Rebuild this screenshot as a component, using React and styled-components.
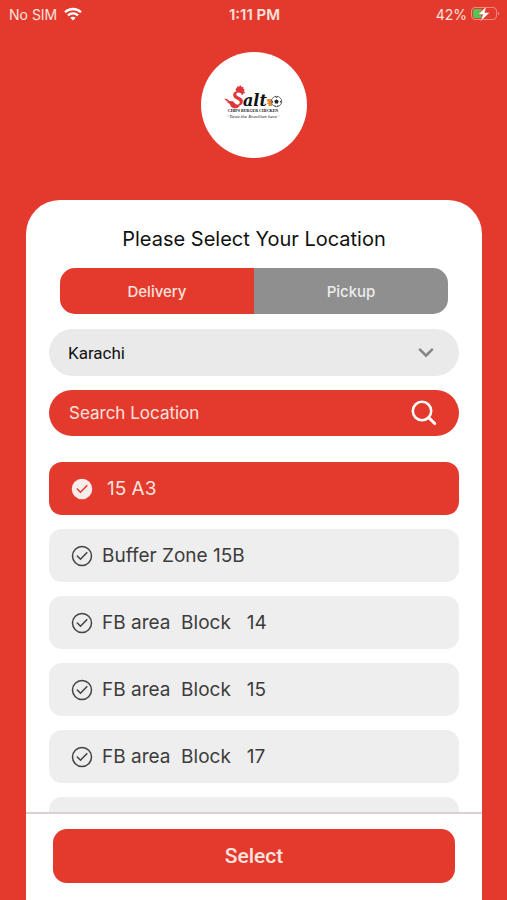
import React, { useState } from 'react'
import styled, { createGlobalStyle, ThemeProvider } from 'styled-components'

const theme = {
  red: '#e43a2e',
  field: '#eaeaea',
  row: '#eeeeee',
  grey: '#8f8f8f',
  text: '#3c3c3c',
  light: '#fbe3df',
  sans: "'Inter', 'Liberation Sans', sans-serif",
  roboto: "'Roboto', 'Liberation Sans', sans-serif",
}

const GlobalStyle = createGlobalStyle`
  *, *::before, *::after {
    box-sizing: border-box;
  }

  body {
    margin: 0;
    background-color: ${theme.red};
    font-family: ${theme.sans};
  }

  button, input, select {
    font: inherit;
    border: none;
    margin: 0;
  }
`

const Screen = styled.div`
  height: 100vh;
  display: flex;
  flex-direction: column;
  background-color: ${props => props.theme.red};
`

const StatusBar = styled.header`
  display: grid;
  grid-template-columns: 1fr auto 1fr;
  align-items: center;
  height: 28px;
  padding: 0 7px 0 9px;
  flex-shrink: 0;
  font-size: 14px;
  color: ${props => props.theme.light};
`

const StatusGroup = styled.div`
  display: flex;
  align-items: center;
  justify-content: ${props => (props.$end ? 'flex-end' : 'flex-start')};
  gap: ${props => (props.$end ? '4px' : '7px')};
`

const Time = styled.span`
  font-size: 15px;
  font-weight: 600;
`

const Logo = styled.div`
  width: 106px;
  height: 106px;
  margin: 24px auto 42px;
  flex-shrink: 0;
  border-radius: 50%;
  background-color: #fff;
`

const Card = styled.main`
  flex: 1;
  min-height: 0;
  display: flex;
  flex-direction: column;
  margin: 0 25px 0 26px;
  border-radius: 34px 34px 0 0;
  background-color: #fff;
`

const Top = styled.div`
  padding: 24px 23px 0;
  flex-shrink: 0;
`

const Title = styled.h1`
  margin: 0 0 14px;
  font-size: 20px;
  line-height: 30px;
  font-weight: 400;
  text-align: center;
  color: #111;
`

const Tabs = styled.div`
  display: flex;
  height: 46px;
  margin: 0 11px 15px;
  border-radius: 15px;
  overflow: hidden;
`

const Tab = styled.button`
  flex: 1;
  padding: 0;
  font-size: 15px;
  font-weight: 500;
  color: ${props => (props.$active ? props.theme.light : '#ececec')};
  background-color: ${props => (props.$active ? props.theme.red : props.theme.grey)};
`

const City = styled.div`
  display: grid;
  align-items: center;
  height: 47px;
  margin-bottom: 14px;

  select, svg {
    grid-area: 1 / 1;
  }

  select {
    width: 100%;
    height: 100%;
    padding: 0 19px;
    appearance: none;
    border-radius: 24px;
    font-family: ${props => props.theme.roboto};
    font-size: 17px;
    color: #111;
    background-color: ${props => props.theme.field};
  }

  svg {
    justify-self: end;
    margin-right: 25px;
    pointer-events: none;
  }
`

const Search = styled.div`
  display: flex;
  align-items: center;
  height: 46px;
  padding: 0 22px 0 20px;
  border-radius: 23px;
  background-color: ${props => props.theme.red};

  input {
    flex: 1;
    min-width: 0;
    padding: 0;
    outline: none;
    font-size: 17px;
    color: ${props => props.theme.light};
    background: transparent;
  }

  input::placeholder {
    color: ${props => props.theme.light};
    opacity: 1;
  }

  button {
    display: flex;
    padding: 0;
    background: transparent;
  }
`

const List = styled.div`
  flex: 1;
  min-height: 0;
  display: flex;
  flex-direction: column;
  gap: 14px;
  margin-top: 26px;
  padding: 0 23px;
  overflow-y: auto;
  scrollbar-width: none;
`

const Option = styled.label`
  display: flex;
  align-items: center;
  gap: ${props => (props.$active ? '14px' : '9px')};
  height: 53px;
  padding: 0 22px;
  flex-shrink: 0;
  border-radius: 13px;
  font-size: 19px;
  white-space: pre;
  color: ${props => (props.$active ? props.theme.light : props.theme.text)};
  background-color: ${props => (props.$active ? props.theme.red : props.theme.row)};

  input {
    position: absolute;
    opacity: 0;
    pointer-events: none;
  }
`

const Footer = styled.footer`
  padding: 15px 27px 17px;
  flex-shrink: 0;
  border-top: 2px solid #dccfcf;
`

const SelectButton = styled.button`
  width: 100%;
  height: 54px;
  border-radius: 14px;
  font-family: ${props => props.theme.roboto};
  font-size: 21px;
  font-weight: 500;
  color: ${props => props.theme.light};
  background-color: ${props => props.theme.red};
`

const WifiIcon = () => (
  <svg width="18" height="14" viewBox="0 0 18 14" fill="none" stroke="#fff" strokeWidth="2.3">
    <path d="M1 5.2C5.4.9 12.6.9 17 5.2" />
    <path d="M4 8.4c2.8-2.7 7.2-2.7 10 0" />
    <path d="M9 13.6 6.3 10.8c1.5-1.4 3.9-1.4 5.4 0Z" fill="#fff" stroke="none" />
  </svg>
)

const BatteryIcon = () => (
  <svg width="29" height="16" viewBox="0 0 29 16">
    <rect x="0.5" y="1.5" width="25" height="12" rx="3.5" fill="none" stroke="#f08a80" />
    <path d="M27 5.500c1.600.6 1.600 3.400 0 4Z" fill="#f08a80" />
    <path d="M4 3h6.500v9H4a2 2 0 0 1-2-2V5a2 2 0 0 1 2-2Z" fill="#55c456" />
    <path d="M15.500.2 7 8.600h4.700L9.500 15.500l9.300-9h-5Z" fill="#fff" stroke="#e43a2e" strokeWidth="0.5" />
  </svg>
)

const ChevronIcon = () => (
  <svg width="16" height="10" viewBox="0 0 16 10" fill="none" stroke="#858585" strokeWidth="2.6">
    <path d="m2 1.700 6 6 6-6" strokeLinecap="round" />
  </svg>
)

const SearchIcon = () => (
  <svg width="26" height="26" viewBox="0 0 26 26" fill="none" stroke="#fff" strokeWidth="2.5">
    <circle cx="11" cy="11" r="9.2" />
    <path d="m17.700 17.700 6 5.800" strokeWidth="3" strokeLinecap="round" />
  </svg>
)

const CheckIcon = ({ active }) => (
  <svg width="22" height="22" viewBox="0 0 22 22" fill="none">
    <circle cx="11" cy="11" r="9.5" fill={active ? '#f7eeec' : 'none'} stroke={active ? '#f7eeec' : '#444'} strokeWidth="1.5" />
    <path d="m6.300 11 3.200 3.200 6.300-6.500" stroke={active ? '#e43a2e' : '#444'} strokeWidth="1.6" strokeLinecap="round" />
  </svg>
)

const SaltoLogo = () => (
  <svg width="106" height="106" viewBox="0 0 106 106" role="img" aria-label="Salto">
    {/* rooster: comb, beak and tail around the S */}
    <g fill="#e0353a">
      <path d="M35.500 39.500c-1.400-2.300-1.100-3.500.3-3.300-.2-2 1-2.700 2.200-1.300.7-1.900 2.500-1.600 2.500.3 1.800-.9 2.700.2 1.800 1.900 1.600.2 1.800 1.300.4 2.200l1.700 1.700-3.200.7Z" />
      <path d="M23.500 46.500c2 .2 3.800 1 4.800 2.500 2.200-.4 5 .8 6.500 3.200l4.200 1.500c-2.500 3.300-7 3.300-9.200.5-.8-2.500-2-3.600-4-4l1-.8c-1.500-.6-2.800-1.500-3.300-2.900Z" />
    </g>
    <text x="30" y="54" fontFamily="'Liberation Serif', serif" fontSize="24" fontWeight="700" fontStyle="italic" fill="#e0353a">S</text>
    <text x="42" y="54" fontFamily="'DejaVu Serif', serif" fontSize="16" fontWeight="700" fontStyle="italic" fill="#111">alt</text>
    <path d="M65.500 47.500c3-.8 5.500-.5 7 .7l-1.700 5.500c-1.600.6-3.400.3-4.200-.8l1.800-.5c-1.400-.1-2.300-.6-2.700-1.500l2.300-.2c-1.500-.5-2.200-1.600-2.500-3.200Z" fill="#ee8a2c" />
    <circle cx="75.500" cy="49.500" r="5.200" fill="#fff" stroke="#555" strokeWidth="0.8" />
    <path d="m75.500 47.300 2.200 1.600-.8 2.600h-2.800l-.8-2.600ZM73.500 44.700l2 1 2-1ZM80.500 48l-1.400 1.500 1 2.200ZM70.700 48l1.300 1.500-.9 2.200ZM72.500 53.200l2 .2.800 1.300ZM78.500 53.200l-2 .2-.8 1.300Z" fill="#222" />
    <text x="52" y="60" textAnchor="middle" fontFamily="'Liberation Serif', serif" fontSize="4" fontWeight="700" fill="#111">CHIPS BURGER CHICKEN</text>
    <text x="52" y="66" textAnchor="middle" fontFamily="'Liberation Serif', serif" fontSize="5" fontStyle="italic" fill="#222">~Taste the Brazilian here~</text>
  </svg>
)

const locations = [
  '15 A3',
  'Buffer Zone 15B',
  'FB area  Block   14',
  'FB area  Block   15',
  'FB area  Block   17',
  'FB area  Block   18',
]

const App = () => {
  const [mode, setMode] = useState('Delivery')
  const [selected, setSelected] = useState(locations[0])

  return (
    <ThemeProvider theme={theme}>
      <GlobalStyle />
      <Screen>
        <StatusBar>
          <StatusGroup>
            <span>No SIM</span>
            <WifiIcon />
          </StatusGroup>
          <Time>1:11 PM</Time>
          <StatusGroup $end>
            <span>42%</span>
            <BatteryIcon />
          </StatusGroup>
        </StatusBar>
        <Logo>
          <SaltoLogo />
        </Logo>
        <Card>
          <Top>
            <Title>Please Select Your Location</Title>
            <Tabs>
              {['Delivery', 'Pickup'].map(name => (
                <Tab key={name} type="button" $active={mode === name} aria-pressed={mode === name} onClick={() => setMode(name)}>
                  {name}
                </Tab>
              ))}
            </Tabs>
            <City>
              <select name="city" aria-label="City">
                <option>Karachi</option>
              </select>
              <ChevronIcon />
            </City>
            <Search>
              <input type="text" name="search" placeholder="Search Location" aria-label="Search Location" />
              <button type="button" aria-label="Search">
                <SearchIcon />
              </button>
            </Search>
          </Top>
          <List role="radiogroup" aria-label="Location">
            {locations.map(item => (
              <Option key={item} $active={selected === item}>
                <input type="radio" name="location" value={item} checked={selected === item} onChange={() => setSelected(item)} />
                <CheckIcon active={selected === item} />
                <span>{item}</span>
              </Option>
            ))}
          </List>
          <Footer>
            <SelectButton type="button">Select</SelectButton>
          </Footer>
        </Card>
      </Screen>
    </ThemeProvider>
  )
}

export default App
